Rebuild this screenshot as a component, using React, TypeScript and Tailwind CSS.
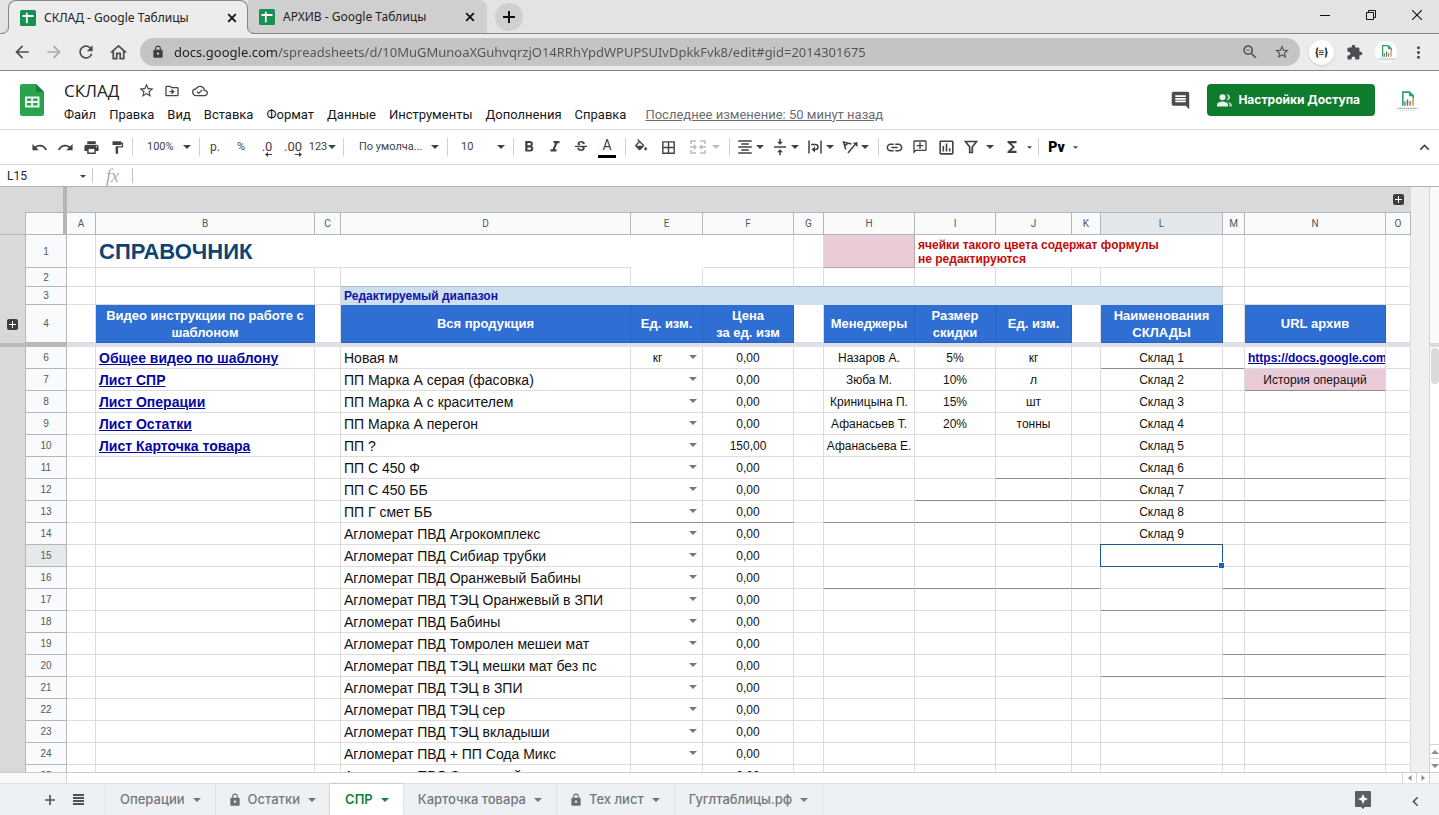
import React, { useState } from "react";
import type { ReactNode } from "react";
import {
  MdAdd,
  MdArrowBack,
  MdArrowForward,
  MdBorderAll,
  MdComment,
  MdExtension,
  MdFormatAlignCenter,
  MdFormatBold,
  MdFormatColorFill,
  MdFormatItalic,
  MdFormatPaint,
  MdFunctions,
  MdInsertLink,
  MdKeyboardArrowLeft,
  MdKeyboardArrowUp,
  MdLock,
  MdMoreVert,
  MdOutlineAddComment,
  MdOutlineCloudDone,
  MdOutlineDriveFileMove,
  MdOutlineHome,
  MdOutlineInsertChart,
  MdPrint,
  MdRedo,
  MdRefresh,
  MdStarBorder,
  MdStrikethroughS,
  MdUndo,
  MdVerticalAlignCenter,
  MdZoomOut,
} from "react-icons/md";

/* ---------- small shared pieces ---------- */

function Caret({ className = "" }: { className?: string }) {
  return (
    <svg viewBox="0 0 8 4" className={`h-1 w-2 shrink-0 ${className}`} aria-hidden="true">
      <path d="M0 0h8L4 4z" fill="currentColor" />
    </svg>
  );
}

function SmallCaret() {
  return (
    <svg viewBox="0 0 8 4" className="h-[3px] w-[5px] shrink-0" aria-hidden="true">
      <path d="M0 0h8L4 4z" fill="currentColor" />
    </svg>
  );
}

function Divider() {
  return <span className="mx-0.5 h-[18px] w-px shrink-0 bg-[#cfd1d3]" />;
}

function Tool({ label, children, className = "w-[26px]" }: { label: string; children: ReactNode; className?: string }) {
  return (
    <button type="button" aria-label={label} className={`flex h-6 shrink-0 items-center justify-center ${className}`}>
      {children}
    </button>
  );
}

function ToolWithCaret({ label, children }: { label: string; children: ReactNode }) {
  return (
    <button type="button" aria-label={label} className="flex h-6 w-[35px] shrink-0 items-center gap-0.5 pl-1">
      {children}
      <Caret />
    </button>
  );
}

function ToolSelect({ label, options, className }: { label: string; options: string[]; className: string }) {
  return (
    <span className={`relative flex h-6 shrink-0 items-center ${className}`}>
      <select aria-label={label} className="w-full appearance-none truncate bg-transparent pr-5 outline-none">
        {options.map((o) => (
          <option key={o}>{o}</option>
        ))}
      </select>
      <Caret className="pointer-events-none absolute right-[6px]" />
    </span>
  );
}

function BrandLogo({ className }: { className: string }) {
  return (
    <svg viewBox="0 0 22 22" className={className} aria-hidden="true">
      <path d="M6.500 16V3h6.500l3.500 3.500V9" fill="none" stroke="#2f9c6a" strokeWidth="1.500" />
      <path d="M12.500 3v4h4z" fill="#2f9c6a" />
      <path d="M8.500 16v-4" stroke="#3d8f72" strokeWidth="1.400" />
      <path d="M11 16v-6" stroke="#8a5a3c" strokeWidth="1.400" />
      <path d="M13.500 16v-4.500" stroke="#6c7f8a" strokeWidth="1.400" />
      <path d="M16.300 16v-7" stroke="#e89a3c" strokeWidth="1.600" />
      <path d="M1.500 18.500h19" stroke="#7d9c95" strokeWidth="1" strokeDasharray="1.500 .5" />
      <path d="M4 20.300h14" stroke="#bcc9c5" strokeWidth=".7" strokeDasharray="1 .5" />
    </svg>
  );
}

/* ---------- browser window ---------- */

function SheetFavicon() {
  return (
    <svg viewBox="0 0 16 16" className="size-4 shrink-0" aria-hidden="true">
      <rect width="16" height="16" rx="1.500" fill="#159152" />
      <path d="M2.500 6h11M6.800 2.800v10.500" stroke="#fff" strokeWidth="1.800" />
    </svg>
  );
}

function CloseX() {
  return (
    <svg viewBox="0 0 10 10" className="size-2.5" aria-hidden="true">
      <path d="M1.200 1.200l7.600 7.600M8.800 1.200l-7.600 7.600" stroke="#161616" strokeWidth="1.900" />
    </svg>
  );
}

function TabStrip() {
  return (
    <div className="flex h-[34px] shrink-0 bg-[#e3e3e3] font-['Noto_Sans',sans-serif] text-xs text-[#222]">
      <div className="w-2 border-b border-[#868686]" />
      <div className="relative z-10 flex w-60 items-center rounded-t-lg border border-b-0 border-[#868686] bg-[#ececec] pr-2.5 pl-[11px]">
        <svg viewBox="0 0 8 8" className="absolute bottom-0 -left-2 size-2" aria-hidden="true">
          <path d="M9 0V8H0Q8 8 8 0z" fill="#ececec" />
          <path d="M0 7.500Q7.500 7.500 7.500 0" fill="none" stroke="#868686" />
        </svg>
        <svg viewBox="0 0 8 8" className="absolute -right-2 bottom-0 size-2" aria-hidden="true">
          <path d="M-1 0V8H8Q0 8 0 0z" fill="#ececec" />
          <path d="M8 7.500Q.5 7.500.5 0" fill="none" stroke="#868686" />
        </svg>
        <SheetFavicon />
        <span className="ml-2 flex-1 truncate">СКЛАД - Google Таблицы</span>
        <button type="button" aria-label="Закрыть вкладку СКЛАД">
          <CloseX />
        </button>
      </div>
      <div className="flex w-[239px] items-center rounded-tr-lg border-b border-[#868686] bg-[#cfcfcf] pr-3 pl-[11px]">
        <SheetFavicon />
        <span className="ml-2 flex-1 truncate">АРХИВ - Google Таблицы</span>
        <button type="button" aria-label="Закрыть вкладку АРХИВ">
          <CloseX />
        </button>
      </div>
      <div className="flex flex-1 items-center justify-between border-b border-[#868686] pl-2">
        <button type="button" aria-label="Новая вкладка" className="flex size-7 items-center justify-center rounded-full bg-[#d0d0d0]">
          <svg viewBox="0 0 12 12" className="size-3" aria-hidden="true">
            <path d="M6 0v12M0 6h12" stroke="#111" strokeWidth="2" />
          </svg>
        </button>
        <div className="flex pb-1">
          <button type="button" aria-label="Свернуть" className="flex h-7 w-[46px] items-center justify-center">
            <svg viewBox="0 0 10 10" className="size-2.5" aria-hidden="true">
              <path d="M0 5.500h10" stroke="#111" />
            </svg>
          </button>
          <button type="button" aria-label="Развернуть" className="flex h-7 w-[46px] items-center justify-center">
            <svg viewBox="0 0 10 10" className="size-2.5" aria-hidden="true">
              <path d="M.5 2.500h7v7h-7zM2.500 2.500v-2h7v7h-2" fill="none" stroke="#111" />
            </svg>
          </button>
          <button type="button" aria-label="Закрыть" className="flex h-7 w-[45px] items-center justify-center">
            <svg viewBox="0 0 10 10" className="size-2.5" aria-hidden="true">
              <path d="M0 0l10 10M10 0L0 10" stroke="#111" strokeWidth="1.100" />
            </svg>
          </button>
        </div>
      </div>
    </div>
  );
}

function AddressBar() {
  const [url, setUrl] = useState(
    "docs.google.com/spreadsheets/d/10MuGMunoaXGuhvqrzjO14RRhYpdWPUPSUIvDpkkFvk8/edit#gid=2014301675",
  );
  return (
    <div className="flex h-[37px] shrink-0 items-center border-b border-[#868686] bg-[#ececec] pr-[11px] pl-[6px] text-[#4a4d51]">
      <Tool label="Назад" className="w-8">
        <MdArrowBack size={20} />
      </Tool>
      <Tool label="Вперёд" className="w-8">
        <MdArrowForward size={20} className="text-[#a9abad]" />
      </Tool>
      <Tool label="Обновить" className="w-8">
        <MdRefresh size={20} />
      </Tool>
      <Tool label="Домашняя страница" className="w-8">
        <MdOutlineHome size={21} />
      </Tool>
      <div className="ml-[6px] flex h-7 flex-1 items-center rounded-full bg-[#c4c4c6] pr-[10px] pl-[11px]">
        <MdLock size={14} className="shrink-0 text-[#3c4043]" />
        <input
          aria-label="Адресная строка"
          value={url}
          onChange={(e) => setUrl(e.target.value)}
          className="ml-[9px] h-6 flex-1 bg-[linear-gradient(to_right,#1d1f21_103px,#505356_103px)] bg-clip-text font-['Noto_Sans',sans-serif] text-[13px] text-transparent caret-black outline-none"
        />
        <Tool label="Масштаб" className="w-8">
          <MdZoomOut size={18} />
        </Tool>
        <Tool label="Добавить в закладки" className="ml-2 w-4">
          <MdStarBorder size={18} />
        </Tool>
      </div>
      <div className="ml-[9px] flex items-center">
        <button
          type="button"
          aria-label="Расширение"
          className="flex size-[25px] items-center justify-center rounded-full bg-white font-['Roboto',sans-serif] text-[10px] font-black text-[#222] shadow"
        >
          {"{≡}"}
        </button>
        <Tool label="Расширения" className="ml-[11px] w-[18px]">
          <MdExtension size={17} />
        </Tool>
        <button type="button" aria-label="Профиль" className="ml-3 flex size-[22px] items-center justify-center rounded-full bg-white">
          <BrandLogo className="size-[19px]" />
        </button>
        <Tool label="Меню браузера" className="ml-[11px] w-5">
          <MdMoreVert size={19} />
        </Tool>
      </div>
    </div>
  );
}

/* ---------- document header ---------- */

const MENUS = ["Файл", "Правка", "Вид", "Вставка", "Формат", "Данные", "Инструменты", "Дополнения", "Справка"];

function DocHeader() {
  return (
    <header className="flex h-[59px] shrink-0 items-center border-b border-[#d9dbdd] bg-white pr-5 pl-5">
      <svg viewBox="0 0 24 32" className="h-8 w-6 shrink-0" aria-label="Таблицы" role="img">
        <path d="M2 0h14l8 8v22a2 2 0 0 1-2 2H2a2 2 0 0 1-2-2V2a2 2 0 0 1 2-2z" fill="#2ba24c" />
        <path d="M16 0l8 8h-6a2 2 0 0 1-2-2z" fill="#188038" />
        <path d="M5 12.500h14.500v11H5zM7 14.500v2.500h4.200v-2.500zM13.200 14.500v2.500h4.300v-2.500zM7 19v2.500h4.200V19zM13.200 19v2.500h4.300V19z" fill="#e9f7ec" fillRule="evenodd" />
      </svg>
      <div className="ml-5 flex min-w-0 flex-1 flex-col gap-0.5 pt-[3px]">
        <div className="flex h-6 items-center text-[#45484c]">
          <h1 className="font-['Open_Sans',sans-serif] text-[17px] text-[#202124]">СКЛАД</h1>
          <Tool label="Пометить" className="ml-[14px] w-[26px]">
            <MdStarBorder size={17} />
          </Tool>
          <Tool label="Переместить">
            <MdOutlineDriveFileMove size={16} />
          </Tool>
          <Tool label="Статус документа" className="w-[29px]">
            <MdOutlineCloudDone size={16} />
          </Tool>
        </div>
        <nav className="flex h-5 items-center gap-[13px] font-['Roboto',sans-serif] text-[13px] whitespace-nowrap text-[#17181a]">
          {MENUS.map((m) => (
            <button type="button" key={m}>
              {m}
            </button>
          ))}
          <a href="#history" className="ml-1.5 text-[#6a6d70] underline">
            Последнее изменение: 50 минут назад
          </a>
        </nav>
      </div>
      <div className="flex shrink-0 items-center">
        <Tool label="Комментарии">
          <MdComment size={21} className="text-[#4c4c4e]" />
        </Tool>
        <button
          type="button"
          className="ml-3.5 flex h-8 items-center gap-1.5 rounded bg-[#0f7b2d] pr-[15px] pl-[10px] font-['Inter',sans-serif] text-xs font-bold text-white"
        >
          <svg viewBox="0 0 15 13" className="h-[13px] w-[15px]" fill="#e8f6ea" aria-hidden="true">
            <circle cx="5.500" cy="3.200" r="3" />
            <path d="M0 12.500v-1.800C0 8.600 3.500 7.500 5.500 7.500S11 8.600 11 10.700v1.800z" />
            <path d="M9 6a3 3 0 0 0 0-5.600 3 3 0 1 1 0 5.600zM12.300 12.500v-1.800c0-1.200-.7-2.100-1.700-2.800 2 .3 4.200 1.200 4.200 2.800v1.800z" opacity=".75" />
          </svg>
          Настройки Доступа
        </button>
        <button type="button" aria-label="Аккаунт" className="ml-[21px]">
          <BrandLogo className="size-[23px]" />
        </button>
      </div>
    </header>
  );
}

/* ---------- formatting toolbar ---------- */

function DecimalIcon({ text, dir }: { text: string; dir: "left" | "right" }) {
  return (
    <span className="flex flex-col items-end pt-1">
      <span className="h-2.5 text-[13px] leading-[10px]">{text}</span>
      <svg viewBox="0 0 7 5" className={`h-[5px] w-[7px] ${dir === "left" ? "" : "rotate-180"}`} aria-hidden="true">
        <path d="M7 2H3V0L0 2.500 3 5V3h4z" fill="currentColor" />
      </svg>
    </span>
  );
}

function Toolbar() {
  return (
    <div className="flex h-[35px] shrink-0 items-center border-b border-[#d3d5d7] bg-white pl-[26px] font-['Roboto',sans-serif] text-[11px] text-[#3f4245]">
      <Tool label="Отменить">
        <MdUndo size={17} />
      </Tool>
      <Tool label="Повторить">
        <MdRedo size={17} />
      </Tool>
      <Tool label="Печать">
        <MdPrint size={17} />
      </Tool>
      <Tool label="Копировать форматирование">
        <MdFormatPaint size={15} />
      </Tool>
      <Divider />
      <ToolSelect label="Масштаб" options={["100%", "125%", "150%"]} className="w-[62px] pl-[12px]" />
      <Divider />
      <Tool label="Денежный формат">
        <span className="text-xs">р.</span>
      </Tool>
      <Tool label="Процентный формат">
        <span className="text-[11px]">%</span>
      </Tool>
      <Tool label="Уменьшить число знаков">
        <DecimalIcon text=".0" dir="left" />
      </Tool>
      <Tool label="Увеличить число знаков">
        <DecimalIcon text=".00" dir="right" />
      </Tool>
      <Tool label="Другие форматы" className="w-[33px] gap-px">
        <span className="text-[11px]">123</span>
        <Caret />
      </Tool>
      <span className="w-0.5" />
      <Divider />
      <ToolSelect label="Шрифт" options={["По умолча...", "Arial", "Roboto"]} className="w-[99px] pl-[13px]" />
      <Divider />
      <ToolSelect label="Размер шрифта" options={["10", "11", "12", "14"]} className="w-[61px] pl-[11px]" />
      <Divider />
      <Tool label="Полужирный">
        <MdFormatBold size={18} />
      </Tool>
      <Tool label="Курсив">
        <MdFormatItalic size={18} />
      </Tool>
      <Tool label="Зачёркнутый">
        <MdStrikethroughS size={16} />
      </Tool>
      <Tool label="Цвет текста">
        <span className="flex w-[18px] flex-col items-center border-b-3 border-black pt-0.5 pb-0.5 text-sm leading-[15px]">A</span>
      </Tool>
      <span className="w-[3px]" />
      <Divider />
      <Tool label="Цвет заливки">
        <svg viewBox="0 0 24 24" className="size-4" fill="currentColor" aria-hidden="true">
          <path d="M16.560 8.940L7.620 0 6.210 1.410l2.380 2.380-5.150 5.150a1.490 1.490 0 0 0 0 2.120l5.500 5.500c.29.29.68.44 1.060.44s.77-.15 1.060-.44l5.500-5.500c.59-.58.59-1.530 0-2.120zM5.210 10L10 5.210 14.790 10H5.210zM19 11.500s-2 2.170-2 3.500c0 1.100.9 2 2 2s2-.9 2-2c0-1.330-2-3.500-2-3.500z" />
        </svg>
      </Tool>
      <Tool label="Границы" className="w-7">
        <MdBorderAll size={17} />
      </Tool>
      <Tool label="Объединить ячейки" className="w-[45px] gap-1.5 text-[#b9bbbd]">
        <svg viewBox="0 0 16 14" className="h-3.5 w-4" fill="none" stroke="currentColor" strokeWidth="1.500" aria-hidden="true">
          <path d="M1 4V1h5M10 1h5v3M1 10v3h5M10 13h5v-3M0 7h5M16 7h-5M4 5l2 2-2 2M12 5l-2 2 2 2" />
        </svg>
        <Caret />
      </Tool>
      <Divider />
      <ToolWithCaret label="Выравнивание по горизонтали">
        <MdFormatAlignCenter size={18} />
      </ToolWithCaret>
      <ToolWithCaret label="Выравнивание по вертикали">
        <MdVerticalAlignCenter size={18} />
      </ToolWithCaret>
      <ToolWithCaret label="Перенос текста">
        <svg viewBox="0 0 18 18" className="size-[18px]" fill="none" stroke="currentColor" strokeWidth="1.500" aria-hidden="true">
          <path d="M3 2.500v13M15 2.500v13M5 6.500h4.500a2.500 2.500 0 0 1 0 5H7" />
          <path d="M9 8.500l-3.500 3L9 14.500z" fill="currentColor" stroke="none" />
        </svg>
      </ToolWithCaret>
      <ToolWithCaret label="Поворот текста">
        <svg viewBox="0 0 18 18" className="size-[18px]" fill="none" stroke="currentColor" strokeWidth="1.500" aria-hidden="true">
          <path d="M4.800 11.500L2.500 4 10.500 6M3.600 7.800L7.200 5.200" />
          <path d="M7 15L14 6.500" />
          <path d="M16.500 4v5l-4.600-4z" fill="currentColor" stroke="none" />
        </svg>
      </ToolWithCaret>
      <span className="w-1" />
      <Divider />
      <Tool label="Вставить ссылку">
        <MdInsertLink size={19} />
      </Tool>
      <Tool label="Вставить комментарий">
        <MdOutlineAddComment size={16} className="-scale-x-100" />
      </Tool>
      <Tool label="Вставить диаграмму">
        <MdOutlineInsertChart size={19} />
      </Tool>
      <Tool label="Фильтр" className="w-10 gap-2">
        <svg viewBox="0 0 14 14" className="size-3.5" fill="none" stroke="currentColor" strokeWidth="1.700" aria-hidden="true">
          <path d="M1.500 1.500h11L8.300 7v5.500H5.700V7z" />
        </svg>
        <Caret />
      </Tool>
      <Tool label="Функции" className="w-[37px] gap-1.5">
        <MdFunctions size={18} />
        <SmallCaret />
      </Tool>
      <Divider />
      <Tool label="Способ ввода" className="w-11 gap-2">
        <span className="text-sm font-black text-black">Pv</span>
        <SmallCaret />
      </Tool>
      <Tool label="Скрыть меню" className="mr-0.5 ml-auto w-[26px]">
        <MdKeyboardArrowUp size={19} />
      </Tool>
    </div>
  );
}

function FormulaBar() {
  return (
    <div className="flex h-[22px] shrink-0 items-center border-b border-[#b0b0b0] bg-white font-['Roboto',sans-serif] text-xs text-[#222]">
      <input aria-label="Имя диапазона" defaultValue="L15" className="w-20 pl-[7px] outline-none" />
      <button type="button" aria-label="Именованные диапазоны" className="w-3 pt-0.5 text-[#444]">
        <svg viewBox="0 0 8 4" className="h-[3px] w-1.5" aria-hidden="true">
          <path d="M0 0h8L4 4z" fill="currentColor" />
        </svg>
      </button>
      <span className="h-[15px] w-px bg-[#c9cbcd]" />
      <label htmlFor="formula" className="w-[39px] text-center font-['Liberation_Serif',serif] text-lg leading-5 text-[#a9abad] italic">
        fx
      </label>
      <span className="h-[15px] w-px bg-[#c0c2c4]" />
      <input id="formula" className="ml-2 min-w-0 flex-1 outline-none" />
    </div>
  );
}

/* ---------- sheet ---------- */

const COLS = ["A", "B", "C", "D", "E", "F", "G", "H", "I", "J", "K", "L", "M", "N", "O"];
const COL_WIDTHS = [29, 219, 26, 290, 72, 91, 30, 91, 81, 76, 29, 122, 22, 141, 25];

const PRODUCTS: [number, string, string][] = [
  [6, "Новая м", "0,00"],
  [7, "ПП Марка А серая (фасовка)", "0,00"],
  [8, "ПП Марка А с красителем", "0,00"],
  [9, "ПП Марка А перегон", "0,00"],
  [10, "ПП ?", "150,00"],
  [11, "ПП С 450 Ф", "0,00"],
  [12, "ПП С 450 ББ", "0,00"],
  [13, "ПП Г смет ББ", "0,00"],
  [14, "Агломерат ПВД Агрокомплекс", "0,00"],
  [15, "Агломерат ПВД Сибиар трубки", "0,00"],
  [16, "Агломерат ПВД Оранжевый Бабины", "0,00"],
  [17, "Агломерат ПВД ТЭЦ Оранжевый в ЗПИ", "0,00"],
  [18, "Агломерат ПВД Бабины", "0,00"],
  [19, "Агломерат ПВД Томролен мешеи мат", "0,00"],
  [20, "Агломерат ПВД ТЭЦ мешки мат без пс", "0,00"],
  [21, "Агломерат ПВД ТЭЦ в ЗПИ", "0,00"],
  [22, "Агломерат ПВД ТЭЦ сер", "0,00"],
  [23, "Агломерат ПВД ТЭЦ вкладыши", "0,00"],
  [24, "Агломерат ПВД + ПП Сода Микс", "0,00"],
  [25, "Агломерат ПВД Слитковый", "0,00"],
];

const LINKS: Record<number, string> = {
  6: "Общее видео по шаблону",
  7: "Лист СПР",
  8: "Лист Операции",
  9: "Лист Остатки",
  10: "Лист Карточка товара",
};

const SIDE: Record<number, Record<string, string>> = {
  6: { H: "Назаров А.", I: "5%", J: "кг", L: "Склад 1" },
  7: { H: "Зюба М.", I: "10%", J: "л", L: "Склад 2", N: "История операций" },
  8: { H: "Криницына П.", I: "15%", J: "шт", L: "Склад 3" },
  9: { H: "Афанасьев Т.", I: "20%", J: "тонны", L: "Склад 4" },
  10: { H: "Афанасьева Е.", L: "Склад 5" },
  11: { L: "Склад 6" },
  12: { L: "Склад 7" },
  13: { L: "Склад 8" },
  14: { L: "Склад 9" },
};

/* columns whose bottom edge carries a solid border, by row */
const RULED: Record<number, string> = {
  6: "LM",
  7: "N",
  11: "JKLMN",
  12: "IJKLMN",
  13: "EFHIJKLMN",
  16: "HIJKMN",
  17: "LMN",
  19: "MN",
  20: "LMN",
  21: "MN",
};

function Expand({ label }: { label: string }) {
  return (
    <button type="button" aria-label={label} className="flex size-[11px] items-center justify-center rounded-xs bg-[#3e3e40]">
      <svg viewBox="0 0 7 7" className="size-[7px]" aria-hidden="true">
        <path d="M3.500 0v7M0 3.500h7" stroke="#fff" />
      </svg>
    </button>
  );
}

function RowHead({ n, active = false }: { n: number; active?: boolean }) {
  return (
    <th
      scope="row"
      className={`border-r border-b border-l border-[#b4b7ba] p-0 text-[10px] font-normal text-[#55585b] ${active ? "bg-[#e6e9ec]" : "bg-[#f8fafb]"}`}
    >
      {n}
    </th>
  );
}

function Gutter({ children }: { children?: ReactNode }) {
  return (
    <td className="bg-[#d9d9d9] p-0">
      <span className="flex justify-center">{children}</span>
    </td>
  );
}

function UnitCell({ value }: { value: string }) {
  return (
    <span className="relative flex h-full items-center">
      <select
        aria-label="Единица измерения"
        defaultValue={value}
        className="h-[21px] w-full appearance-none bg-transparent pr-[18px] text-center outline-none [text-align-last:center]"
      >
        <option value="" />
        <option>кг</option>
        <option>л</option>
        <option>шт</option>
        <option>тонны</option>
      </select>
      <Caret className="pointer-events-none absolute right-[5px] mb-0.5 text-[#75787b]" />
    </span>
  );
}

const GRID = "border-r border-b border-[#dcdcdc]";
const HEAD = "border-r border-b border-[#2a62c2] bg-[#2f6fd3] p-0 text-[13px] leading-[17px] font-bold text-white";

function SheetRow({ row, product, price }: { row: number; product: string; price: string }) {
  return (
    <tr className="h-[22px]">
      <Gutter />
      <RowHead n={row} active={row === 15} />
      {COLS.map((c) => {
        const ruled = (RULED[row] ?? "").includes(c);
        const line = ruled ? "border-b-[#8c8c8c]" : "border-b-[#dcdcdc]";
        const base = `h-[22px] border-r border-b border-r-[#dcdcdc] p-0 leading-[20px] ${line}`;
        if (c === "B") {
          return (
            <td key={c} className={`${base} overflow-hidden pl-[3px] text-sm leading-[20px] font-bold whitespace-nowrap`}>
              {LINKS[row] && (
                <a href={`#video-${row}`} className="text-[#0505a4] underline">
                  {LINKS[row]}
                </a>
              )}
            </td>
          );
        }
        if (c === "D") {
          return (
            <td key={c} className={`${base} overflow-hidden pl-[3px] text-sm leading-[20px] whitespace-nowrap`}>
              {product}
            </td>
          );
        }
        if (c === "E") {
          return (
            <td key={c} className={`${base} text-xs`}>
              <UnitCell value={row === 6 ? "кг" : ""} />
            </td>
          );
        }
        if (c === "F") {
          return (
            <td key={c} className={`${base} text-center text-xs leading-[20px]`}>
              {price}
            </td>
          );
        }
        if (c === "N" && row === 6) {
          return (
            <td key={c} className={`${base} overflow-hidden pl-[3px] text-xs leading-[20px] font-bold whitespace-nowrap`}>
              <a href="https://docs.google.com" className="text-[#0505a4] underline">
                https://docs.google.com
              </a>
            </td>
          );
        }
        if (c === "L" && row === 15) {
          return (
            <td key={c} className={`${base} relative`}>
              <span className="absolute -inset-px z-10 border border-[#1b5a8e]" />
              <span className="absolute -right-[3px] -bottom-[3px] z-20 size-[7px] border border-white bg-[#1a63c4]" />
            </td>
          );
        }
        return (
          <td
            key={c}
            className={`${base} text-center text-xs leading-[20px] whitespace-nowrap ${c === "N" && row === 7 ? "bg-[#e9ccd7]" : ""}`}
          >
            {SIDE[row]?.[c]}
          </td>
        );
      })}
    </tr>
  );
}

function Sheet() {
  return (
    <table className="w-[1411px] shrink-0 table-fixed border-separate border-spacing-0 self-start bg-white font-['Liberation_Sans',sans-serif] text-[#111]">
      <colgroup>
        <col style={{ width: 25 }} />
        <col style={{ width: 42 }} />
        {COL_WIDTHS.map((w, i) => (
          <col key={COLS[i]} style={{ width: w }} />
        ))}
      </colgroup>
      <thead className="font-['Roboto',sans-serif]">
        <tr className="h-[25px] bg-[#d9d9d9]">
          <td className="p-0" />
          <td className="border-r-4 border-[#b5b5b5] p-0" />
          <td colSpan={14} className="p-0" />
          <td className="p-0">
            <span className="flex justify-center">
              <Expand label="Развернуть столбцы" />
            </span>
          </td>
        </tr>
        <tr className="h-[23px] text-[10px] text-[#55585b]">
          <td className="border-b border-[#b4b7ba] bg-[#d9d9d9] p-0" />
          <td className="border-t border-r-4 border-b border-l border-[#b5b5b5] bg-[#f8fafb] p-0" />
          {COLS.map((c) => (
            <th
              key={c}
              scope="col"
              className={`border-t border-r border-b border-[#b4b7ba] p-0 font-normal ${c === "L" ? "bg-[#e4e7ea]" : "bg-[#f8fafb]"}`}
            >
              {c}
            </th>
          ))}
        </tr>
      </thead>
      <tbody>
        <tr className="h-[33px]">
          <Gutter />
          <RowHead n={1} />
          <td className={GRID} />
          <td colSpan={3} className="border-b border-[#dcdcdc] p-0 pt-0.5 pl-[3px] text-[22px] leading-7 font-bold text-[#0c4474]">
            СПРАВОЧНИК
          </td>
          <td className="p-0" />
          <td className={GRID} />
          <td className={GRID} />
          <td className="border-r border-b border-[#b9a3ac] bg-[#e9ccd7] p-0" />
          <td colSpan={4} className={`${GRID} p-0 pt-px pl-[3px] text-xs leading-[14px] font-bold text-[#c40a0a]`}>
            ячейки такого цвета содержат формулы
            <br />
            не редактируются
          </td>
          <td className={GRID} />
          <td className={GRID} />
          <td className={GRID} />
        </tr>
        <tr className="h-[19px]">
          <Gutter />
          <RowHead n={2} />
          {COLS.map((c) => (
            <td
              key={c}
              className={`border-r border-b border-r-[#dcdcdc] p-0 ${"DEFGHIJKL".includes(c) ? "border-b-[#abbccb]" : "border-b-[#dcdcdc]"}`}
            />
          ))}
        </tr>
        <tr className="h-[18px]">
          <Gutter />
          <RowHead n={3} />
          <td className={GRID} />
          <td className={GRID} />
          <td className={GRID} />
          <td colSpan={9} className="border-r border-r-[#c2d3e2] bg-[#ccdfef] p-0 pl-[3px] text-xs leading-[18px] font-bold text-[#1212a8]">
            Редактируемый диапазон
          </td>
          <td className={GRID} />
          <td className={GRID} />
          <td className={GRID} />
        </tr>
        <tr className="h-[38px] text-center">
          <Gutter>
            <Expand label="Развернуть строки" />
          </Gutter>
          <RowHead n={4} />
          <td className={GRID} />
          <th className={HEAD}>
            Видео инструкции по работе с<br />
            шаблоном
          </th>
          <td className={GRID} />
          <th className={HEAD}>Вся продукция</th>
          <th className={HEAD}>Ед. изм.</th>
          <th className={HEAD}>
            Цена
            <br />
            за ед. изм
          </th>
          <td className={GRID} />
          <th className={HEAD}>Менеджеры</th>
          <th className={HEAD}>
            Размер
            <br />
            скидки
          </th>
          <th className={HEAD}>Ед. изм.</th>
          <td className={GRID} />
          <th className={HEAD}>
            Наименования
            <br />
            СКЛАДЫ
          </th>
          <td className={GRID} />
          <th className={HEAD}>URL архив</th>
          <td className={GRID} />
        </tr>
        <tr className="h-1">
          <td colSpan={2} className="bg-[#b9b9b9] p-0" />
          <td colSpan={15} className="bg-[#dce0e7] p-0" />
        </tr>
        {PRODUCTS.map(([row, product, price]) => (
          <SheetRow key={row} row={row} product={product} price={price} />
        ))}
      </tbody>
    </table>
  );
}

function VerticalScroll() {
  return (
    <div className="flex w-2.5 shrink-0 flex-col border-l border-[#d2d4d6] bg-white text-[#8a8d90]">
      <div className="h-[156px] bg-[#f8f9fa]" />
      <div className="h-1 bg-[#d5d9e0]" />
      <div className="mx-auto mt-px h-9 w-2 rounded-full bg-[#d8dadd]" />
      <div className="flex-1" />
      <button type="button" aria-label="Вверх" className="flex h-3.5 items-center justify-center border-t border-[#d2d4d6]">
        <Caret className="rotate-180" />
      </button>
      <button type="button" aria-label="Вниз" className="flex h-3.5 items-center justify-center border-t border-[#d2d4d6]">
        <Caret />
      </button>
    </div>
  );
}

function HorizontalScroll() {
  return (
    <div className="flex h-[11px] shrink-0 border-t border-[#c9cbcd] bg-white text-[#8a8d90]">
      <div className="w-[67px] border-r border-[#d2d4d6] bg-[#f8f9fa]" />
      <div className="flex-1" />
      <button type="button" aria-label="Влево" className="flex w-3.5 items-center justify-center border-l border-[#d2d4d6]">
        <svg viewBox="0 0 4 6" className="h-1.5 w-1" aria-hidden="true">
          <path d="M3.500 0v6L0 3z" fill="currentColor" />
        </svg>
      </button>
      <button type="button" aria-label="Вправо" className="flex w-3.5 items-center justify-center border-x border-[#d2d4d6]">
        <svg viewBox="0 0 4 6" className="h-1.5 w-1" aria-hidden="true">
          <path d="M.5 0v6L4 3z" fill="currentColor" />
        </svg>
      </button>
      <div className="w-[9px] bg-[#f8f9fa]" />
    </div>
  );
}

/* ---------- sheet tabs ---------- */

const SHEETS: { name: string; locked?: boolean; active?: boolean }[] = [
  { name: "Операции" },
  { name: "Остатки", locked: true },
  { name: "СПР", active: true },
  { name: "Карточка товара" },
  { name: "Тех лист", locked: true },
  { name: "Гуглтаблицы.рф" },
];

function SheetTabs() {
  return (
    <footer className="flex h-8 shrink-0 items-stretch border-t border-[#dfe1e3] bg-[#eef1f3] font-['Inter',sans-serif] text-[13px] font-medium text-[#74787c]">
      <div className="flex w-[105px] items-center pl-[36px] text-[#4f5357]">
        <Tool label="Добавить лист" className="w-7">
          <svg viewBox="0 0 10 10" className="size-2.5" aria-hidden="true">
            <path d="M5 0v10M0 5h10" stroke="currentColor" strokeWidth="1.700" />
          </svg>
        </Tool>
        <Tool label="Все листы" className="w-7">
          <svg viewBox="0 0 11 11" className="size-[11px]" aria-hidden="true">
            <path d="M0 1h11M0 4h11M0 7h11M0 10h11" stroke="currentColor" strokeWidth="1.800" />
          </svg>
        </Tool>
      </div>
      {SHEETS.map((s) => (
        <button
          type="button"
          key={s.name}
          className={
            s.active
              ? "flex items-center gap-2 bg-white pr-3.5 pl-[15px] font-semibold text-[#18813a] shadow-[0_0_2px_rgba(0,0,0,0.3)]"
              : "flex items-center gap-2 border-l border-[#e0e3e5] pr-3.5 pl-3.5"
          }
        >
          {s.locked && <MdLock size={14} className="-mx-0.5 text-[#6a6e72]" />}
          {s.name}
          <Caret />
        </button>
      ))}
      <span className="w-px bg-[#e0e3e5]" />
      <div className="ml-auto flex items-center text-[#4f5357]">
        <Tool label="Анализ данных" className="w-[26px]">
          <svg viewBox="0 0 16 18" className="h-[18px] w-4" aria-hidden="true">
            <path d="M1 0h14a1 1 0 0 1 1 1v14a1 1 0 0 1-1 1h-5l-2 2-2-2H1a1 1 0 0 1-1-1V1a1 1 0 0 1 1-1z" fill="#5b5e62" />
            <path d="M8 3l1.500 3.500L13 8 9.500 9.500 8 13 6.500 9.500 3 8l3.500-1.500z" fill="#fff" />
          </svg>
        </Tool>
        <Tool label="Показать боковую панель" className="mt-1 mr-[11px] ml-[26px] w-[26px]">
          <MdKeyboardArrowLeft size={19} />
        </Tool>
      </div>
    </footer>
  );
}

export default function App() {
  return (
    <div className="flex h-screen min-h-0 flex-col overflow-hidden bg-white">
      <TabStrip />
      <AddressBar />
      <DocHeader />
      <Toolbar />
      <FormulaBar />
      <main className="flex min-h-0 flex-1 overflow-hidden">
        <div className="flex min-w-0 flex-1 overflow-hidden bg-[#f0f0f0]">
          <Sheet />
        </div>
        <VerticalScroll />
      </main>
      <HorizontalScroll />
      <SheetTabs />
    </div>
  );
}
